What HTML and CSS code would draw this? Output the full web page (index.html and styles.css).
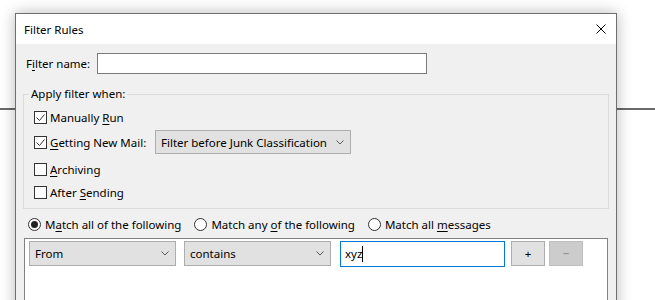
FILE: index.html
```html
<!DOCTYPE html>
<html lang="en">
<head>
  <meta charset="UTF-8" />
  <title>Filter Rules</title>
  <link rel="stylesheet" href="styles.css">
</head>
<body>
  <!-- window behind the dialog -->
  <div class="backdrop-line"></div>

  <div class="dialog">
    <div class="titlebar">
      <span class="title">Filter Rules</span>
      <svg class="close" width="10" height="10" viewBox="0 0 10 10">
        <path d="M0.5 0.5 L9.5 9.5 M9.5 0.5 L0.5 9.5" stroke="#000" stroke-width="1" fill="none" />
      </svg>
    </div>

    <div class="dialog-body">
      <div class="name-row">
        <label class="name-label" for="filterName">F<u>i</u>lter name:</label>
        <input class="text-input name-input" id="filterName" type="text" />
      </div>

      <fieldset class="group">
        <legend>Apply filter when:</legend>

        <div class="check-row">
          <span class="checkbox">
            <svg width="11" height="11" viewBox="0 0 11 11"><polyline points="1.5,5.5 4.5,8.5 9.5,2.5" /></svg>
          </span>
          <span>Manually <u>R</u>un</span>
        </div>

        <div class="check-row row-tall">
          <span class="checkbox">
            <svg width="11" height="11" viewBox="0 0 11 11"><polyline points="1.5,5.5 4.5,8.5 9.5,2.5" /></svg>
          </span>
          <span class="mail-label"><u>G</u>etting New Mail:</span>
          <div class="select junk-select">
            <span>Filter before Junk Classification</span>
            <svg class="chevron" width="8" height="5" viewBox="0 0 8 5"><polyline points="0.5,0.5 4,4 7.5,0.5" /></svg>
          </div>
        </div>

        <div class="check-row">
          <span class="checkbox"></span>
          <span><u>A</u>rchiving</span>
        </div>

        <div class="check-row">
          <span class="checkbox"></span>
          <span>After <u>S</u>ending</span>
        </div>
      </fieldset>

      <div class="radio-row">
        <div class="radio-item">
          <span class="radio checked"></span>
          <span>M<u>a</u>tch all of the following</span>
        </div>
        <div class="radio-item">
          <span class="radio"></span>
          <span>Match any <u>o</u>f the following</span>
        </div>
        <div class="radio-item">
          <span class="radio"></span>
          <span>Match all <u>m</u>essages</span>
        </div>
      </div>

      <div class="rule-list">
        <div class="rule-row">
          <div class="select rule-select">
            <span>From</span>
            <svg class="chevron" width="8" height="5" viewBox="0 0 8 5"><polyline points="0.5,0.5 4,4 7.5,0.5" /></svg>
          </div>
          <div class="select rule-select op-select">
            <span>contains</span>
            <svg class="chevron" width="8" height="5" viewBox="0 0 8 5"><polyline points="0.5,0.5 4,4 7.5,0.5" /></svg>
          </div>
          <div class="value-input"><span>xyz</span><span class="caret"></span></div>
          <button class="small-btn" type="button">+</button>
          <button class="small-btn" type="button" disabled>&minus;</button>
        </div>
      </div>
    </div>
  </div>
</body>
</html>
```

FILE: styles.css
```css
body {
  margin: 0;
  background: #ffffff;
  font-family: "Noto Sans", "Open Sans", sans-serif;
  font-size: 11.5px;
  color: #000;
  overflow: hidden;
}

u {
  text-decoration: underline;
  text-underline-offset: 2px;
}

.backdrop-line {
  position: absolute;
  left: 0;
  right: 0;
  top: 108px;
  height: 2px;
  background-color: #6a6a6a;
}

.dialog {
  position: relative;
  width: 602px;
  margin: 13px 0 0 15px;
  border: 1px solid #6f6f6f;
  box-sizing: border-box;
  background-color: #f0f0f0;
  box-shadow: 0 0 14px rgba(0, 0, 0, 0.28);
}

.titlebar {
  height: 30px;
  background-color: #fff;
  display: flex;
  align-items: center;
  padding-left: 8px;
}

.title {
  flex: 1;
}

.close {
  margin-right: 10px;
}

.dialog-body {
  padding: 9px 7px 0 7px;
  height: 280px;
}

/* filter name */
.name-row {
  display: flex;
  align-items: center;
  padding-left: 3px;
}

.name-label {
  width: 71px;
}

.text-input {
  height: 21px;
  box-sizing: border-box;
  border: 1px solid #7a7a7a;
  background: #fff;
  margin: 0;
  padding: 0 4px;
  font: inherit;
}

.name-input {
  width: 330px;
}

/* group box */
.group {
  margin: 12px 0 0 0;
  padding: 2px 0 5px 10px;
  border: 1px solid #dcdcdc;
  display: flex;
  flex-direction: column;
}

.group legend {
  padding: 0 2px;
  margin-left: -5px;
  line-height: 16px;
}

.check-row {
  display: flex;
  align-items: center;
  height: 22px;
  margin-top: 2px;
}

.check-row:last-child {
  margin-top: 1px;
}

.check-row.row-tall {
  height: 26px;
  margin-top: 1px;
  margin-bottom: 1px;
}

.checkbox {
  width: 13px;
  height: 13px;
  box-sizing: border-box;
  border: 1px solid #333;
  background: #fff;
  margin-right: 3px;
  display: flex;
}

.checkbox svg polyline {
  fill: none;
  stroke: #333;
  stroke-width: 1;
}

.mail-label {
  width: 105px;
}

/* dropdowns */
.select {
  display: flex;
  align-items: center;
  justify-content: space-between;
  box-sizing: border-box;
  border: 1px solid #adadad;
  background-color: #e1e1e1;
  padding: 0 6px 0 5px;
}

.chevron polyline {
  fill: none;
  stroke: #5a5a5a;
  stroke-width: 1;
}

.junk-select {
  width: 196px;
  height: 24px;
}

/* match radios */
.radio-row {
  display: flex;
  align-items: center;
  height: 16px;
  margin-top: 7px;
  padding-left: 5px;
}

.radio-item {
  display: flex;
  align-items: center;
  margin-right: 13px;
}

.radio {
  width: 13px;
  height: 13px;
  box-sizing: border-box;
  border: 1px solid #333;
  border-radius: 50%;
  background: #fff;
  margin-right: 4px;
  display: flex;
  align-items: center;
  justify-content: center;
}

.radio.checked::after {
  content: "";
  width: 7px;
  height: 7px;
  border-radius: 50%;
  background: #222;
}

/* rules */
.rule-list {
  margin: 6px 1px 0 1px;
  height: 120px;
  border: 1px solid #828282;
  background: #fff;
}

.rule-row {
  display: flex;
  align-items: center;
  padding: 1px 0 0 4px;
  height: 27px;
}

.rule-select {
  width: 147px;
  height: 25px;
  margin-right: 8px;
}

.op-select {
  margin-right: 9px;
}

.value-input {
  width: 165px;
  height: 26px;
  box-sizing: border-box;
  border: 1px solid #0078d7;
  display: flex;
  align-items: center;
  padding-left: 4px;
}

.caret {
  width: 1px;
  height: 16px;
  background: #000;
}

.small-btn {
  width: 34px;
  height: 25px;
  margin-left: 6px;
  padding: 0;
  border: 1px solid #adadad;
  background-color: #e1e1e1;
  color: #000;
  font: inherit;
}

.small-btn + .small-btn {
  margin-left: 4px;
}

.small-btn:disabled {
  background-color: #cccccc;
  border-color: #bfbfbf;
  color: #838383;
}
```
